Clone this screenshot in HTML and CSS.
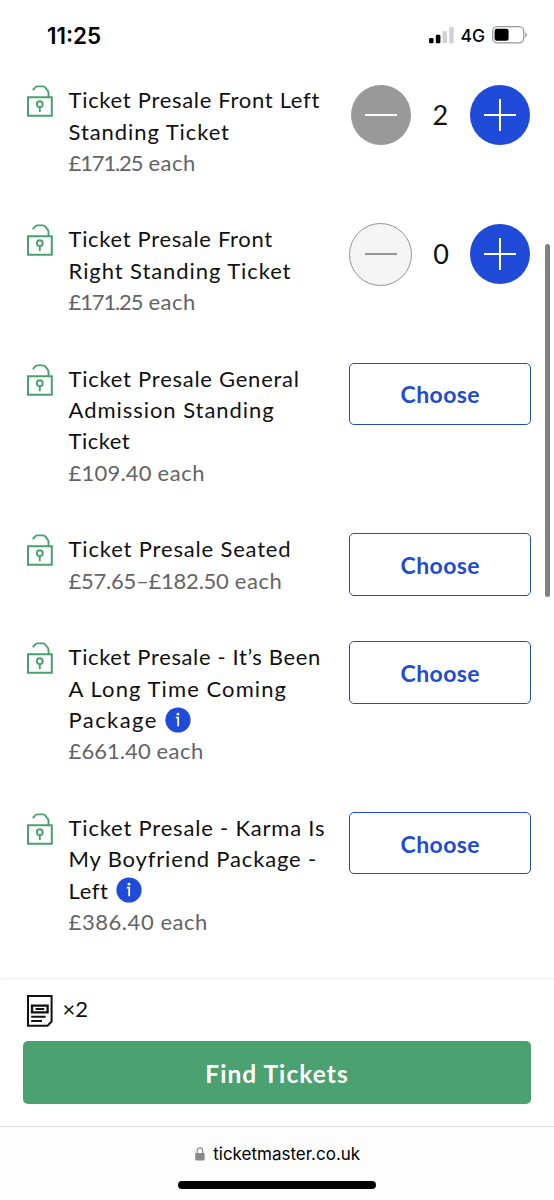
FILE: index.html
```html
<!DOCTYPE html>
<html lang="en">
<head>
<meta charset="utf-8">
<title>Find Tickets</title>
<link rel="stylesheet" href="styles.css">
</head>
<body>
<svg class="defs" aria-hidden="true">
  <symbol id="unlock" viewBox="0 0 26 32">
    <path d="M5.8 5.2 8 2.6C8.7 1.7 9.3 1.4 10.4 1.4H16.1C17.2 1.4 17.8 1.8 18.4 2.6L20.8 5.7C21.3 6.4 21.5 7 21.5 8V12" fill="none" stroke="currentColor" stroke-width="1.9"/>
    <path d="M1 12.2H24.8V30.8H1Z" fill="none" stroke="currentColor" stroke-width="2"/>
    <circle cx="12.8" cy="19.2" r="2.9" fill="none" stroke="currentColor" stroke-width="1.9"/>
    <path d="M12.8 22.1V27.2" stroke="currentColor" stroke-width="1.9"/>
  </symbol>
  <symbol id="minus" viewBox="0 0 32 32"><path d="M0 16H32" stroke="currentColor" stroke-width="2"/></symbol>
  <symbol id="plus" viewBox="0 0 32 32"><path d="M0 16H32M16 0V32" stroke="currentColor" stroke-width="2"/></symbol>
</svg>
<div class="screen">
  <header class="status">
    <span class="clock">11:25</span>
    <div class="signals">
      <svg class="bars" viewBox="0 0 25 17"><rect x="0" y="11" width="4.6" height="5.3" rx="1.3"/><rect x="6.8" y="7.8" width="4.6" height="8.5" rx="1.3"/><rect class="off" x="13.5" y="4" width="4.6" height="12.3" rx="1.3"/><rect class="off" x="20.2" y="0" width="4.6" height="16.3" rx="1.3"/></svg>
      <span class="network">4G</span>
      <svg class="battery" viewBox="0 0 36 18"><rect x=".7" y=".7" width="31" height="16.2" rx="4.5" fill="none" stroke="#999" stroke-width="1.3"/><rect x="2.6" y="2.8" width="14" height="12" rx="2.3"/><path d="M33.4 6Q36.6 8.8 33.4 11.8Z" fill="#999"/></svg>
    </div>
  </header>
  <main class="tickets">
    <section class="ticket">
      <svg class="lock"><use href="#unlock"/></svg>
      <div class="info"><span class="line l1">Ticket Presale Front Left</span><span class="line l2">Standing Ticket</span><span class="line price"><span class="p1">£171.25</span> each</span></div>
      <div class="stepper"><button class="round active"><svg class="sign"><use href="#minus"/></svg></button><span class="count">2</span><button class="round add"><svg class="sign"><use href="#plus"/></svg></button></div>
    </section>
    <section class="ticket">
      <svg class="lock"><use href="#unlock"/></svg>
      <div class="info"><span class="line l3">Ticket Presale Front</span><span class="line l4">Right Standing Ticket</span><span class="line price"><span class="p1">£171.25</span> each</span></div>
      <div class="stepper"><button class="round disabled"><svg class="sign"><use href="#minus"/></svg></button><span class="count">0</span><button class="round add"><svg class="sign"><use href="#plus"/></svg></button></div>
    </section>
    <section class="ticket">
      <svg class="lock"><use href="#unlock"/></svg>
      <div class="info"><span class="line l5">Ticket Presale General</span><span class="line l6">Admission Standing</span><span class="line l7">Ticket</span><span class="line price"><span class="p2">£109.40 </span>each</span></div>
      <button class="choose">Choose</button>
    </section>
    <section class="ticket">
      <svg class="lock"><use href="#unlock"/></svg>
      <div class="info"><span class="line l8">Ticket Presale Seated</span><span class="line price"><span class="p3">£57.65–£182.50</span> each</span></div>
      <button class="choose">Choose</button>
    </section>
    <section class="ticket">
      <svg class="lock"><use href="#unlock"/></svg>
      <div class="info"><span class="line l9">Ticket Presale - It’s Been</span><span class="line l10">A Long Time Coming</span><span class="line tagged"><span class="l11">Package</span><svg class="tip" viewBox="0 0 26 26"><circle cx="13" cy="13" r="12.6" fill="#1f4bd8"/><path d="M10.8 10.6H13.2V19.2" fill="none" stroke="#fff" stroke-width="1.8"/><circle cx="13" cy="7.2" r="1.4" fill="#fff"/></svg></span><span class="line price"><span class="p4">£661.40 </span>each</span></div>
      <button class="choose">Choose</button>
    </section>
    <section class="ticket">
      <svg class="lock"><use href="#unlock"/></svg>
      <div class="info"><span class="line l12">Ticket Presale - Karma Is</span><span class="line l13">My Boyfriend Package -</span><span class="line tagged"><span class="l14">Left</span><svg class="tip" viewBox="0 0 26 26"><circle cx="13" cy="13" r="12.6" fill="#1f4bd8"/><path d="M10.8 10.6H13.2V19.2" fill="none" stroke="#fff" stroke-width="1.8"/><circle cx="13" cy="7.2" r="1.4" fill="#fff"/></svg></span><span class="line price">£386.40 each</span></div>
      <button class="choose">Choose</button>
    </section>
  </main>
  <footer class="cart">
    <div class="summary">
      <svg class="slip" viewBox="0 0 26 32" fill="none" stroke="#111"><path d="M1 1.1H24.6V26.5L20.5 30.7H1Z" stroke-width="2"/><path d="M5 10.6H20.6V17.4H5Z" stroke-width="2.3"/><path d="M8.6 14H17.2M4.2 21.8H18.6M4.2 26.1H15" stroke-width="2"/></svg>
      <span class="qty">×2</span>
    </div>
    <button class="find">Find Tickets</button>
  </footer>
  <nav class="browser">
    <div class="address"><svg class="padlock" viewBox="0 0 10 14"><rect x=".2" y="6" width="9.4" height="7.6" rx="1.3" fill="#8a8a8c"/><path d="M2.1 6.5V3.7a2.8 2.8 0 0 1 5.6 0V6.5" fill="none" stroke="#8a8a8c" stroke-width="1.2"/></svg><span class="domain">ticketmaster.co.uk</span></div>
    <div class="home"></div>
  </nav>
  <div class="scrollbar"></div>
</div>
</body>
</html>
```

FILE: styles.css
```css
* { box-sizing: border-box; }
body { margin: 0; background: #fff; }
button { margin: 0; padding: 0; border: 0; font: inherit; }
svg { display: block; flex: none; }
.defs { display: none; }
.screen { position: relative; display: flex; flex-direction: column; width: 554px; height: 1200px; overflow: hidden; background: #fff; color: #111; font-family: Lato, sans-serif; }
.status { display: flex; flex: none; justify-content: space-between; height: 85px; padding: 0 26px 0 47px; font-family: Inter, sans-serif; color: #000; }
.clock { padding-top: 22px; font-size: 22.4px; line-height: 28px; font-weight: 600; }
.signals { display: flex; align-items: flex-start; }
.bars { width: 25px; height: 17px; margin-top: 27px; }
.off { fill: #d2d2d2; }
.network { flex: none; width: 38.5px; padding: 25px 0 0 7px; font-size: 17.5px; line-height: 22px; font-weight: 500; white-space: nowrap; }
.battery { width: 36px; height: 18px; margin-top: 26px; }
.tickets { flex: none; height: 895px; overflow: hidden; }
.ticket { display: flex; align-items: flex-start; padding: 0 22.7px 46.2px 27px; }
.lock { width: 26px; height: 32px; color: #48a16d; }
.info { flex: 1; margin-top: -.8px; padding-left: 15.6px; font-size: 22px; line-height: 31.3px; }
.line { display: block; height: 31.3px; white-space: nowrap; letter-spacing: .55px; }
.l1 { letter-spacing: .69px; }
.l2 { letter-spacing: .92px; }
.l3 { letter-spacing: .66px; }
.l4 { letter-spacing: .92px; }
.l5 { letter-spacing: .74px; }
.l6 { letter-spacing: .95px; }
.l7 { letter-spacing: .45px; }
.l8 { letter-spacing: .83px; }
.l9 { letter-spacing: .63px; }
.l10 { letter-spacing: 1.08px; }
.l11 { letter-spacing: 1.4px; }
.l12 { letter-spacing: .8px; }
.l13 { letter-spacing: .83px; }
.price { color: #646464; }
.p1 { letter-spacing: -1.16px; }
.p2 { letter-spacing: .2px; }
.p3 { letter-spacing: -.25px; }
.p4 { letter-spacing: .05px; }
.tagged { display: flex; align-items: center; gap: 7.8px; }
.tip { width: 26px; height: 26px; }
.stepper { display: flex; align-items: center; justify-content: space-between; width: 182px; height: 62px; margin-top: -.9px; flex: none; }
.round { display: flex; flex: none; align-items: center; justify-content: center; width: 60px; height: 60px; border-radius: 50%; color: #fff; }
.active { margin-left: 1.2px; background: #999; }
.disabled { width: 63px; height: 63px; border: 1.3px solid #949494; background: #f5f5f5; color: #949494; }
.add { margin-right: 1.3px; background: #1f4bd8; }
.sign { width: 32px; height: 32px; }
.count { width: 40px; text-align: center; font-size: 27px; line-height: 32px; color: #111; }
.choose { flex: none; width: 182px; height: 62.6px; margin-top: -1px; padding-top: 1px; border: 1.4px solid #1f4bc9; border-radius: 5px; background: #fff; color: #1f4bd0; font-size: 23px; font-weight: 700; letter-spacing: .4px; }
.cart { flex: none; height: 146px; padding: 15px 22.7px 0; background: #fff; box-shadow: 0 0 5px rgba(0, 0, 0, .12); }
.summary { display: flex; height: 45.8px; padding-left: 4.3px; }
.slip { width: 26px; height: 32px; }
.qty { padding-left: 9.6px; font-size: 22px; line-height: 28px; }
.find { width: 100%; height: 62.8px; padding-top: 2px; border-radius: 5px; background: #4ba16f; color: #fff; font-size: 24.5px; font-weight: 700; letter-spacing: 1.05px; }
.browser { position: relative; flex: 1; display: flex; flex-direction: column; align-items: center; border-top: 1px solid #dcdcde; background: #fdfdfe; }
.address { display: flex; align-items: center; gap: 8px; height: 20px; margin-top: 17px; padding-left: 1.4px; }
.padlock { width: 10px; height: 14px; }
.domain { font-family: Inter, sans-serif; font-size: 17px; line-height: 20px; color: #000; }
.home { width: 198px; height: 7.6px; margin-top: 17.2px; border-radius: 4px; background: #000; }
.scrollbar { position: absolute; left: 545px; top: 244px; width: 5px; height: 353px; border-radius: 3px; background: #808080; }
```
